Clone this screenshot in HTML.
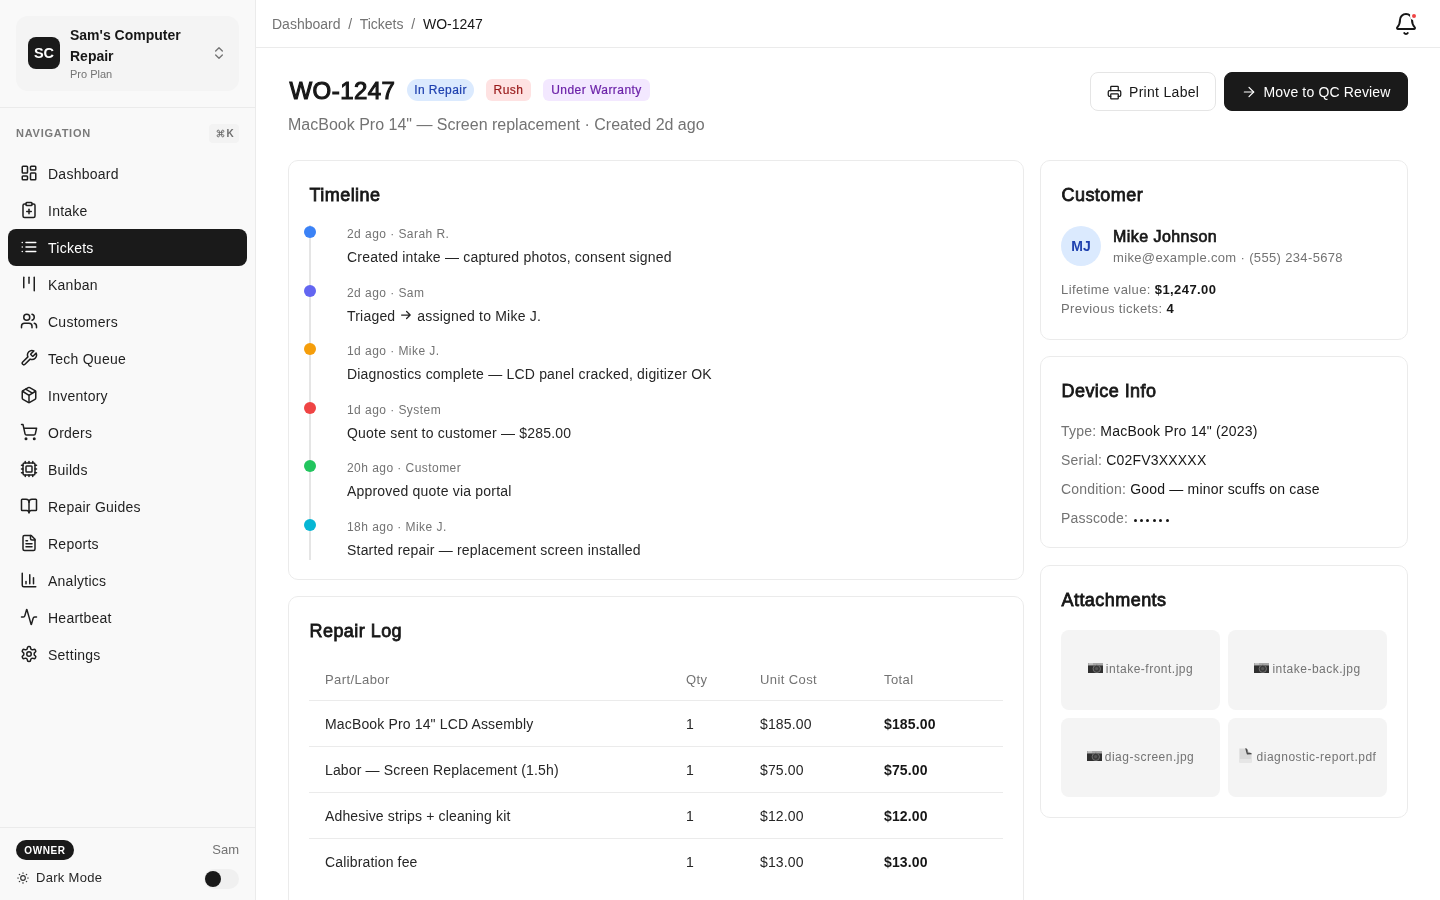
<!DOCTYPE html>
<html><head><meta charset="utf-8">
<style>
*{box-sizing:border-box;margin:0;padding:0}
html,body{width:1440px;height:900px;overflow:hidden;background:#fff;font-family:"Liberation Sans",sans-serif;color:#171717;-webkit-font-smoothing:antialiased}
body>div{will-change:transform}
svg.i{fill:none;stroke:currentColor;stroke-width:2;stroke-linecap:round;stroke-linejoin:round;display:block}
.sb{position:absolute;left:0;top:0;width:256px;height:900px;background:#f9f9f9;border-right:1px solid #ebebeb}
.brand{position:absolute;left:16px;top:16px;width:223px;height:75px;background:#f4f4f4;border-radius:12px}
.logo{position:absolute;left:12px;top:21px;width:32px;height:32px;border-radius:8px;background:#1a1a1a;color:#fff;font-weight:700;font-size:14.5px;line-height:33px;text-align:center}
.bname{position:absolute;left:54px;top:9px;font-size:14px;font-weight:700;line-height:21px;color:#171717}
.bplan{position:absolute;left:54px;top:50px;font-size:11px;line-height:16px;color:#737373}
.chev{position:absolute;left:195px;top:29px;color:#737373}
.sbdiv{position:absolute;left:0;top:107px;width:255px;height:1px;background:#ebebeb}
.navlbl{position:absolute;left:16px;top:127px;font-size:11px;font-weight:700;letter-spacing:0.75px;color:#7a7a7a;line-height:13px}
.kbd{position:absolute;left:209px;top:124px;width:30px;height:19px;border-radius:4px;background:#f3f3f3;color:#6e6e6e;font-size:10px;line-height:20px;text-align:center;font-weight:700}
.nav{position:absolute;left:8px;top:155px;width:239px}
.ni{position:relative;height:37px;border-radius:8px;color:#1f1f1f;font-size:14px;line-height:36px;padding-top:1px;padding-left:40px;letter-spacing:0.25px}
.ni svg{position:absolute;left:12px;top:8.5px}
.ni.act{background:#1a1a1a;color:#fff}
.sbfoot{position:absolute;left:0;top:827px;width:255px;height:73px;border-top:1px solid #ebebeb}
.owner{position:absolute;left:16px;top:12px;width:58px;height:20px;border-radius:10px;background:#1a1a1a;color:#fff;font-size:10px;font-weight:700;letter-spacing:0.6px;line-height:21px;text-align:center}
.sam{position:absolute;right:16px;top:14px;font-size:13px;color:#737373;line-height:16px}
.dm{position:absolute;left:16px;top:41px;width:223px;height:20px}
.dm svg{position:absolute;left:0px;top:1.8px;color:#333}
.dm span{position:absolute;left:20px;top:1px;font-size:13px;line-height:16px;color:#262626;letter-spacing:0.3px}
.tog{position:absolute;right:0;top:-0.5px;width:35px;height:20px;border-radius:10px;background:#f0f0f0}
.tog i{position:absolute;left:1px;top:2px;width:16px;height:16px;border-radius:50%;background:#1a1a1a}

.hdr{position:absolute;left:256px;top:0;width:1184px;height:48px;border-bottom:1px solid #ebebeb}
.crumb{position:absolute;left:16px;top:16px;font-size:14px;line-height:17px;color:#737373;white-space:pre}
.crumb b{font-weight:400;color:#171717}
.bell{position:absolute;left:1138px;top:12px;color:#171717}
.bdot{position:absolute;left:1154px;top:12px;width:8px;height:8px;border-radius:50%;background:#ef4444;border:2px solid #fff}

.main{position:absolute;left:288px;top:48px;width:1120px}
.ttl{position:absolute;left:1.5px;top:26.5px;letter-spacing:0.45px;-webkit-text-stroke:1.1px #171717;font-size:24px;font-weight:400;line-height:32px;color:#171717}
.bdg{position:absolute;top:31px;height:22px;line-height:22px;font-size:12px;border-radius:6px;white-space:nowrap;text-align:center;letter-spacing:0.45px;-webkit-text-stroke:0.2px currentColor}
.sub{position:absolute;left:0;top:65px;font-size:16px;line-height:24px;color:#737373;white-space:pre}
.btn{position:absolute;top:24px;height:39px;border-radius:8px;font-size:14px;line-height:38px;padding-left:40px;white-space:nowrap;letter-spacing:0.15px}
.btn svg{position:absolute;left:16px;top:11px}
.b1{left:802px;width:126px;border:1px solid #e5e5e5;background:#fff;color:#171717;padding-left:38px;letter-spacing:0.3px}
.b2{left:936px;width:184px;border:1px solid #1a1a1a;background:#1a1a1a;color:#fff;padding-left:38.5px}

.card{position:absolute;background:#fff;border:1px solid #ebebeb;border-radius:10px}
.ct{position:absolute;left:20.5px;top:20px;font-size:18px;font-weight:400;line-height:28px;color:#171717;-webkit-text-stroke:0.8px #171717;letter-spacing:0.45px}

.tl{position:absolute;left:20px;top:64px;width:694px;height:335px;border-left:2px solid #e5e5e5}
.it{position:absolute;left:36px;width:640px}
.it .dot{position:absolute;left:-43px;top:1px;width:12px;height:12px;border-radius:50%}
.it .m{font-size:12px;line-height:18px;color:#737373;white-space:pre;letter-spacing:0.45px}
.it .t{margin-top:4px;font-size:14px;line-height:21px;color:#262626;white-space:pre;letter-spacing:0.2px}
table{border-collapse:collapse;position:absolute;left:20px;top:64px;width:694px;table-layout:fixed}
th{font-size:13px;font-weight:400;color:#737373;text-align:left;padding:9px 16px 11px;line-height:19px;border-bottom:1px solid #ebebeb;letter-spacing:0.4px}
td{font-size:14px;line-height:21px;color:#262626;padding:13px 16px 11px;border-bottom:1px solid #ebebeb;white-space:nowrap;letter-spacing:0.15px}
tr:last-child td{border-bottom:0}
td.b{font-weight:700;color:#171717}
.av{position:absolute;left:20px;top:65px;width:40px;height:40px;border-radius:50%;background:#dbeafe;color:#1e40af;font-size:14px;font-weight:700;line-height:40px;text-align:center}
.cn{position:absolute;left:72px;top:64px;font-size:16px;font-weight:400;line-height:24px;color:#171717;-webkit-text-stroke:0.7px #171717;letter-spacing:0.45px}
.ce{position:absolute;left:72px;top:86.5px;font-size:13px;line-height:19px;color:#737373;white-space:pre;letter-spacing:0.35px}
.cl{position:absolute;left:20px;font-size:13px;line-height:19px;color:#737373;white-space:pre;letter-spacing:0.4px}
.cl b{color:#171717}
.dr{position:absolute;left:20px;font-size:14px;line-height:21px;color:#737373;white-space:pre;letter-spacing:0.2px}
.dr span{color:#171717}
.pc{margin-left:1.3px}
.pc i{display:inline-block;width:3px;height:3px;border-radius:50%;background:#171717;margin-right:3.45px;vertical-align:1.5px}
.tile{position:absolute;width:159px;height:79.5px;border-radius:8px;background:#f4f4f4;font-size:12px;color:#737373;line-height:79px;text-align:center;white-space:pre;letter-spacing:0.5px}
.tile svg{display:inline-block;vertical-align:middle}
.tile svg.cam{margin:-3px 3px 0 0}
.tile svg.doc{margin:-3px 5px 0 0}
</style></head><body>
<div class="sb">
  <div class="brand">
    <div class="logo">SC</div>
    <div class="bname">Sam's Computer<br>Repair</div>
    <div class="bplan">Pro Plan</div>
    <svg class="i chev" width="16" height="16" viewBox="0 0 24 24"><path d="m7 15 5 5 5-5"/><path d="m7 9 5-5 5 5"/></svg>
  </div>
  <div class="sbdiv"></div>
  <div class="navlbl">NAVIGATION</div>
  <div class="kbd"><svg class="i" width="9" height="9" viewBox="0 0 24 24" style="position:absolute;left:6.5px;top:4.5px;stroke-width:2.6"><path d="M15 6v12a3 3 0 1 0 3-3H6a3 3 0 1 0 3 3V6a3 3 0 1 0-3 3h12a3 3 0 1 0-3-3"/></svg><span style="position:absolute;left:17.5px;top:0;font-weight:700">K</span></div>
  <div class="nav">
    <div class="ni"><svg class="i" width="18" height="18" viewBox="0 0 24 24"><rect width="7" height="9" x="3" y="3" rx="1"/><rect width="7" height="5" x="14" y="3" rx="1"/><rect width="7" height="9" x="14" y="12" rx="1"/><rect width="7" height="5" x="3" y="16" rx="1"/></svg>Dashboard</div>
    <div class="ni"><svg class="i" width="18" height="18" viewBox="0 0 24 24"><rect width="8" height="4" x="8" y="2" rx="1" ry="1"/><path d="M16 4h2a2 2 0 0 1 2 2v14a2 2 0 0 1-2 2H6a2 2 0 0 1-2-2V6a2 2 0 0 1 2-2h2"/><path d="M9 14h6"/><path d="M12 17v-6"/></svg>Intake</div>
    <div class="ni act"><svg class="i" width="18" height="18" viewBox="0 0 24 24"><path d="M3 12h.01"/><path d="M3 18h.01"/><path d="M3 6h.01"/><path d="M8 12h13"/><path d="M8 18h13"/><path d="M8 6h13"/></svg>Tickets</div>
    <div class="ni"><svg class="i" width="18" height="18" viewBox="0 0 24 24"><path d="M5 3v14"/><path d="M12 3v8"/><path d="M19 3v18"/></svg>Kanban</div>
    <div class="ni"><svg class="i" width="18" height="18" viewBox="0 0 24 24"><path d="M16 21v-2a4 4 0 0 0-4-4H6a4 4 0 0 0-4 4v2"/><circle cx="9" cy="7" r="4"/><path d="M22 21v-2a4 4 0 0 0-3-3.87"/><path d="M16 3.13a4 4 0 0 1 0 7.75"/></svg>Customers</div>
    <div class="ni"><svg class="i" width="18" height="18" viewBox="0 0 24 24"><path d="M14.7 6.3a1 1 0 0 0 0 1.4l1.6 1.6a1 1 0 0 0 1.4 0l3.77-3.77a6 6 0 0 1-7.94 7.94l-6.91 6.91a2.12 2.12 0 0 1-3-3l6.91-6.91a6 6 0 0 1 7.94-7.94l-3.76 3.76z"/></svg>Tech Queue</div>
    <div class="ni"><svg class="i" width="18" height="18" viewBox="0 0 24 24"><path d="M11 21.73a2 2 0 0 0 2 0l7-4A2 2 0 0 0 21 16V8a2 2 0 0 0-1-1.73l-7-4a2 2 0 0 0-2 0l-7 4A2 2 0 0 0 3 8v8a2 2 0 0 0 1 1.73z"/><path d="M12 22V12"/><path d="m3.3 7 7.703 4.734a2 2 0 0 0 1.994 0L20.7 7"/><path d="m7.5 4.27 9 5.15"/></svg>Inventory</div>
    <div class="ni"><svg class="i" width="18" height="18" viewBox="0 0 24 24"><circle cx="8" cy="21" r="1"/><circle cx="19" cy="21" r="1"/><path d="M2.05 2.05h2l2.66 12.42a2 2 0 0 0 2 1.58h9.78a2 2 0 0 0 1.95-1.57l1.65-7.43H5.12"/></svg>Orders</div>
    <div class="ni"><svg class="i" width="18" height="18" viewBox="0 0 24 24"><path d="M12 20v2"/><path d="M12 2v2"/><path d="M17 20v2"/><path d="M17 2v2"/><path d="M2 12h2"/><path d="M2 17h2"/><path d="M2 7h2"/><path d="M20 12h2"/><path d="M20 17h2"/><path d="M20 7h2"/><path d="M7 20v2"/><path d="M7 2v2"/><rect x="4" y="4" width="16" height="16" rx="2"/><rect x="8" y="8" width="8" height="8" rx="1"/></svg>Builds</div>
    <div class="ni"><svg class="i" width="18" height="18" viewBox="0 0 24 24"><path d="M12 7v14"/><path d="M3 18a1 1 0 0 1-1-1V4a1 1 0 0 1 1-1h5a4 4 0 0 1 4 4 4 4 0 0 1 4-4h5a1 1 0 0 1 1 1v13a1 1 0 0 1-1 1h-6a3 3 0 0 0-3 3 3 3 0 0 0-3-3z"/></svg>Repair Guides</div>
    <div class="ni"><svg class="i" width="18" height="18" viewBox="0 0 24 24"><path d="M15 2H6a2 2 0 0 0-2 2v16a2 2 0 0 0 2 2h12a2 2 0 0 0 2-2V7Z"/><path d="M14 2v4a2 2 0 0 0 2 2h4"/><path d="M10 9H8"/><path d="M16 13H8"/><path d="M16 17H8"/></svg>Reports</div>
    <div class="ni"><svg class="i" width="18" height="18" viewBox="0 0 24 24"><path d="M3 3v16a2 2 0 0 0 2 2h16"/><path d="M18 17V9"/><path d="M13 17V5"/><path d="M8 17v-3"/></svg>Analytics</div>
    <div class="ni"><svg class="i" width="18" height="18" viewBox="0 0 24 24"><path d="M22 12h-2.48a2 2 0 0 0-1.93 1.46l-2.35 8.36a.25.25 0 0 1-.48 0L9.24 2.18a.25.25 0 0 0-.48 0l-2.35 8.36A2 2 0 0 1 4.49 12H2"/></svg>Heartbeat</div>
    <div class="ni"><svg class="i" width="18" height="18" viewBox="0 0 24 24"><path d="M12.22 2h-.44a2 2 0 0 0-2 2v.18a2 2 0 0 1-1 1.73l-.43.25a2 2 0 0 1-2 0l-.15-.08a2 2 0 0 0-2.73.73l-.22.38a2 2 0 0 0 .73 2.73l.15.1a2 2 0 0 1 1 1.72v.51a2 2 0 0 1-1 1.74l-.15.09a2 2 0 0 0-.73 2.73l.22.38a2 2 0 0 0 2.73.73l.15-.08a2 2 0 0 1 2 0l.43.25a2 2 0 0 1 1 1.73V20a2 2 0 0 0 2 2h.44a2 2 0 0 0 2-2v-.18a2 2 0 0 1 1-1.73l.43-.25a2 2 0 0 1 2 0l.15.08a2 2 0 0 0 2.73-.73l.22-.39a2 2 0 0 0-.73-2.73l-.15-.08a2 2 0 0 1-1-1.74v-.5a2 2 0 0 1 1-1.74l.15-.09a2 2 0 0 0 .73-2.73l-.22-.38a2 2 0 0 0-2.73-.73l-.15.08a2 2 0 0 1-2 0l-.43-.25a2 2 0 0 1-1-1.73V4a2 2 0 0 0-2-2z"/><circle cx="12" cy="12" r="3"/></svg>Settings</div>
  </div>
  <div class="sbfoot">
    <div class="owner">OWNER</div>
    <div class="sam">Sam</div>
    <div class="dm">
      <svg class="i" width="14" height="14" viewBox="0 0 24 24"><circle cx="12" cy="12" r="4"/><path d="M12 3v1"/><path d="M12 20v1"/><path d="M3 12h1"/><path d="M20 12h1"/><path d="m18.364 5.636-.707.707"/><path d="m6.343 17.657-.707.707"/><path d="m5.636 5.636.707.707"/><path d="m17.657 17.657.707.707"/></svg>
      <span>Dark Mode</span>
      <div class="tog"><i></i></div>
    </div>
  </div>
</div>

<div class="hdr">
  <div class="crumb">Dashboard  /  Tickets  /  <b>WO-1247</b></div>
  <svg class="i bell" width="24" height="24" viewBox="0 0 24 24"><path d="M10.268 21a2 2 0 0 0 3.464 0"/><path d="M3.262 15.326A1 1 0 0 0 4 17h16a1 1 0 0 0 .74-1.673C19.41 13.956 18 12.499 18 8A6 6 0 0 0 6 8c0 4.499-1.411 5.956-2.738 7.326"/></svg>
  <div class="bdot"></div>
</div>

<div class="main">
  <div class="ttl">WO-1247</div>
  <div class="bdg" style="left:119px;width:67px;background:#dbeafe;color:#1e40af;border-radius:11px">In Repair</div>
  <div class="bdg" style="left:198px;width:45px;background:#fee2e2;color:#991b1b">Rush</div>
  <div class="bdg" style="left:255px;width:107px;background:#f3e8ff;color:#6b21a8">Under Warranty</div>
  <div class="sub">MacBook Pro 14" — Screen replacement · Created 2d ago</div>
  <div class="btn b1"><svg class="i" width="15" height="15" style="top:11.5px;left:15.5px" viewBox="0 0 24 24"><path d="M6 18H4a2 2 0 0 1-2-2v-5a2 2 0 0 1 2-2h16a2 2 0 0 1 2 2v5a2 2 0 0 1-2 2h-2"/><path d="M6 9V3a1 1 0 0 1 1-1h10a1 1 0 0 1 1 1v6"/><rect x="6" y="14" width="12" height="8" rx="1"/></svg>Print Label</div>
  <div class="btn b2"><svg class="i" width="16" height="16" style="left:15.5px;stroke-width:1.8" viewBox="0 0 24 24"><path d="M5 12h14"/><path d="m12 5 7 7-7 7"/></svg>Move to QC Review</div>
</div>

<div class="card" style="left:288px;top:160px;width:736px;height:420px">
  <div class="ct">Timeline</div>
  <div class="tl"><div class="it" style="top:0.0px"><div class="dot" style="background:#3b82f6"></div><div class="m">2d ago · Sarah R.</div><div class="t">Created intake — captured photos, consent signed</div></div><div class="it" style="top:58.6px"><div class="dot" style="background:#6366f1"></div><div class="m">2d ago · Sam</div><div class="t">Triaged<svg width="10" height="8" viewBox="0 0 10 8" style="margin:0 6px 0 6px;vertical-align:1.5px;overflow:visible"><path d="M0.6 4h8.6M5.6 0.5 9.2 4 5.6 7.5" fill="none" stroke="#262626" stroke-width="1.25" stroke-linecap="round" stroke-linejoin="round"/></svg>assigned to Mike J.</div></div><div class="it" style="top:117.2px"><div class="dot" style="background:#f59e0b"></div><div class="m">1d ago · Mike J.</div><div class="t">Diagnostics complete — LCD panel cracked, digitizer OK</div></div><div class="it" style="top:175.8px"><div class="dot" style="background:#ef4444"></div><div class="m">1d ago · System</div><div class="t">Quote sent to customer — $285.00</div></div><div class="it" style="top:234.4px"><div class="dot" style="background:#22c55e"></div><div class="m">20h ago · Customer</div><div class="t">Approved quote via portal</div></div><div class="it" style="top:293.0px"><div class="dot" style="background:#06b6d4"></div><div class="m">18h ago · Mike J.</div><div class="t">Started repair — replacement screen installed</div></div></div>
</div>
<div class="card" style="left:288px;top:596px;width:736px;height:330px">
  <div class="ct">Repair Log</div>
  <table><colgroup><col style="width:361px"><col style="width:74px"><col style="width:124px"><col style="width:135px"></colgroup>
  <thead><tr><th>Part/Labor</th><th>Qty</th><th>Unit Cost</th><th>Total</th></tr></thead>
  <tbody><tr><td>MacBook Pro 14" LCD Assembly</td><td>1</td><td>$185.00</td><td class="b">$185.00</td></tr><tr><td>Labor — Screen Replacement (1.5h)</td><td>1</td><td>$75.00</td><td class="b">$75.00</td></tr><tr><td>Adhesive strips + cleaning kit</td><td>1</td><td>$12.00</td><td class="b">$12.00</td></tr><tr><td>Calibration fee</td><td>1</td><td>$13.00</td><td class="b">$13.00</td></tr></tbody></table>
</div>
<div class="card" style="left:1040px;top:160px;width:368px;height:180px">
  <div class="ct">Customer</div>
  <div class="av">MJ</div>
  <div class="cn">Mike Johnson</div>
  <div class="ce">mike@example.com · (555) 234-5678</div>
  <div class="cl" style="top:119px">Lifetime value: <b>$1,247.00</b></div>
  <div class="cl" style="top:138px">Previous tickets: <b>4</b></div>
</div>
<div class="card" style="left:1040px;top:356px;width:368px;height:192px">
  <div class="ct">Device Info</div>
  <div class="dr" style="top:64px">Type: <span>MacBook Pro 14" (2023)</span></div>
  <div class="dr" style="top:93px">Serial: <span>C02FV3XXXXX</span></div>
  <div class="dr" style="top:122px">Condition: <span>Good — minor scuffs on case</span></div>
  <div class="dr" style="top:151px">Passcode: <span class="pc"><i></i><i></i><i></i><i></i><i></i><i></i></span></div>
</div>
<div class="card" style="left:1040px;top:565px;width:368px;height:253px">
  <div class="ct">Attachments</div>
  <div class="tile" style="left:20px;top:64px"><svg class="cam" width="15" height="10" viewBox="0 0 15 10"><rect x="0" y="0" width="15" height="3" fill="#a8a8a8"/><rect x="1" y="0.3" width="4" height="1.2" fill="#d0d0d0"/><rect x="0" y="2.5" width="15" height="7.5" fill="#2f2f2f"/><circle cx="8.8" cy="5.8" r="3.7" fill="#3a3a3a" stroke="#777" stroke-width="0.9"/><circle cx="8.6" cy="5.6" r="1.6" fill="#555"/></svg>intake-front.jpg</div>
  <div class="tile" style="left:187px;top:64px"><svg class="cam" width="15" height="10" viewBox="0 0 15 10"><rect x="0" y="0" width="15" height="3" fill="#a8a8a8"/><rect x="1" y="0.3" width="4" height="1.2" fill="#d0d0d0"/><rect x="0" y="2.5" width="15" height="7.5" fill="#2f2f2f"/><circle cx="8.8" cy="5.8" r="3.7" fill="#3a3a3a" stroke="#777" stroke-width="0.9"/><circle cx="8.6" cy="5.6" r="1.6" fill="#555"/></svg>intake-back.jpg</div>
  <div class="tile" style="left:20px;top:151.5px"><svg class="cam" width="15" height="10" viewBox="0 0 15 10"><rect x="0" y="0" width="15" height="3" fill="#a8a8a8"/><rect x="1" y="0.3" width="4" height="1.2" fill="#d0d0d0"/><rect x="0" y="2.5" width="15" height="7.5" fill="#2f2f2f"/><circle cx="8.8" cy="5.8" r="3.7" fill="#3a3a3a" stroke="#777" stroke-width="0.9"/><circle cx="8.6" cy="5.6" r="1.6" fill="#555"/></svg>diag-screen.jpg</div>
  <div class="tile" style="left:187px;top:151.5px"><svg class="doc" width="13" height="15" viewBox="0 0 13 15"><path d="M0.4 0.4h6.6l5.6 5.6v8.6H0.4z" fill="#d9d9d9"/><path d="M0.4 11h12.2v3.6H0.4z" fill="#e6e6e6"/><path d="M6.2 0.3 L7.6 0.4 L8.6 1.8 L8.7 4.6 L12.3 4.9 L12.8 6.3 L8 6.5 L7.6 5.6 Z" fill="#4a4a4a"/></svg>diagnostic-report.pdf</div>
</div>
</body></html>
